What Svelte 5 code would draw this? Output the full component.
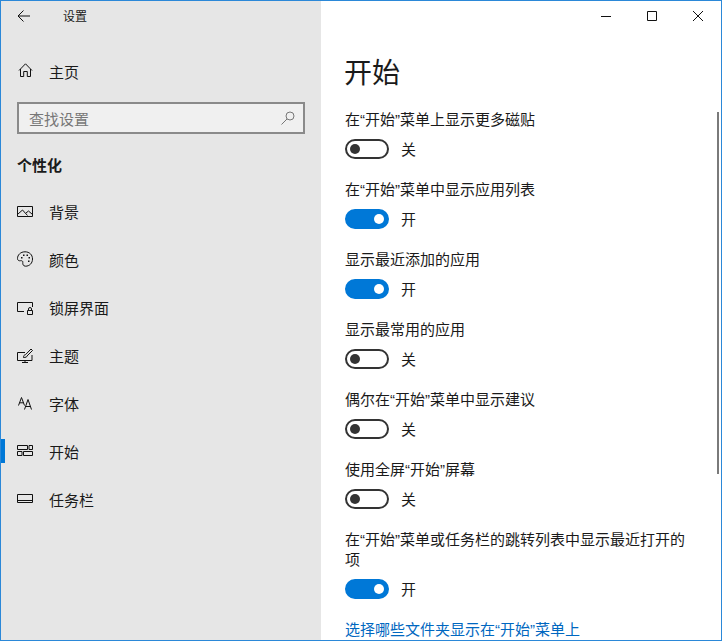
<script>
	const navItems = [
		{ label: "背景", icon: "image" },
		{ label: "颜色", icon: "palette" },
		{ label: "锁屏界面", icon: "lock" },
		{ label: "主题", icon: "theme" },
		{ label: "字体", icon: "font" },
		{ label: "开始", icon: "start", active: true },
		{ label: "任务栏", icon: "taskbar" }
	];

	const settings = [
		{ label: "在“开始”菜单上显示更多磁贴", on: false },
		{ label: "在“开始”菜单中显示应用列表", on: true },
		{ label: "显示最近添加的应用", on: true },
		{ label: "显示最常用的应用", on: false },
		{ label: "偶尔在“开始”菜单中显示建议", on: false },
		{ label: "使用全屏“开始”屏幕", on: false },
		{ label: "在“开始”菜单或任务栏的跳转列表中显示最近打开的项", on: true }
	];
</script>

<div class="window">
	<aside class="sidebar">
		<div class="titlebar">
			<svg class="back" width="14" height="12" viewBox="0 0 14 12">
				<path d="M6.500.5 1 6l5.500 5.500M1 6h12" />
			</svg>
			<span>设置</span>
		</div>
		<div class="home">
			<svg width="16" height="16" viewBox="0 0 16 16">
				<path d="M2 7.500 8.500.8 15 7.500M3.500 6v7.500h3.200V8.500h3.600v5h3.200V6" />
			</svg>
			<span>主页</span>
		</div>
		<div class="search">
			<span>查找设置</span>
			<svg width="16" height="16" viewBox="0 0 16 16">
				<circle cx="11" cy="6" r="4" />
				<path d="M8 9 2.500 14.500" />
			</svg>
		</div>
		<h2>个性化</h2>
		<nav>
			{#each navItems as item}
				<div class="nav-item" class:active={item.active}>
					<svg width="16" height="16" viewBox="0 0 16 16">
						{#if item.icon === "image"}
							<path d="M.5 3.500h15v10H.5zM1 11l4.500-4 5 5.500M9 10l2.500-2 4 3.500" />
						{:else if item.icon === "palette"}
							<path d="M8 .8C3.500.8.500 4 .5 7.500c0 2 1.500 2.500 3 2.200 1.500-.2 2.500.4 2.300 1.800-.2 1.500.3 3.700 2.700 3.700 4 0 7-3 7-7.200S12.500.8 8 .8z" />
							<path class="dots" d="M4 6h1.500v1.500H4zM6 3.500h1.500V5H6zM9.500 3.500H11V5H9.500zM11.500 6H13v1.500h-1.500zM11 9.500h1.500V11H11z" />
						{:else if item.icon === "lock"}
							<path d="M7 12.500H.5v-9h15V8" />
							<path d="M10.500 11.500h5v4h-5zM11.500 11.500V10a1.500 1.500 0 0 1 3 0v1.500" />
						{:else if item.icon === "theme"}
							<path d="M8 5.500H.5v8h14.500V8M8 13.500v2M5 15.500h6" />
							<path d="M6.500 10.500c0-2 .8-2.700 2-2.800L14 2l1.500 1.500L10 9c0 1-1.500 1.500-3.500 1.500z" />
						{:else if item.icon === "font"}
							<path d="M1.500 10.500 4.500 2.500l3 8M2.500 7.800h4M7.500 14.500 11 4.500l3.500 10M8.600 11.500h4.800" />
						{:else if item.icon === "start"}
							<path d="M.5 2.500h10v4H.5zM12 2.500h3.500v4H12zM.5 8.500H5v4H.5zM6.500 8.500h9v4h-9z" />
						{:else}
							<path d="M.5 3.500h15v8H.5zM.5 9.500h15" />
						{/if}
					</svg>
					<span>{item.label}</span>
				</div>
			{/each}
		</nav>
	</aside>

	<main class="content">
		<div class="controls">
			<svg width="10" height="10" viewBox="0 0 10 10"><path d="M0 5.500h10" /></svg>
			<svg width="10" height="10" viewBox="0 0 10 10"><path d="M.5.5h9v9h-9z" /></svg>
			<svg width="10" height="10" viewBox="0 0 10 10"><path d="M0 0l10 10M10 0 0 10" /></svg>
		</div>
		<h1>开始</h1>
		{#each settings as s}
			<div class="setting">
				<div class="label">{s.label}</div>
				<div class="toggle-row">
					<span class="toggle" class:on={s.on}><i></i></span>
					<span class="state">{s.on ? "开" : "关"}</span>
				</div>
			</div>
		{/each}
		<div class="link">选择哪些文件夹显示在“开始”菜单上</div>
		<div class="scrollbar"></div>
	</main>
</div>

<style>
	:global(body) {
		margin: 0;
	}
	.window {
		box-sizing: border-box;
		width: 722px;
		height: 641px;
		display: flex;
		border: 1px solid #2b88d8;
		overflow: hidden;
		position: relative;
		background: #fff;
		color: #1a1a1a;
		font-family: "Liberation Sans", "Noto Sans CJK SC", sans-serif;
		font-size: 15px;
	}
	svg {
		flex: none;
		fill: none;
		stroke: #111;
		stroke-width: 1;
	}
	.sidebar {
		width: 320px;
		flex: none;
		background: #e6e6e6;
	}
	.titlebar {
		height: 29px;
		display: flex;
		align-items: center;
		padding-left: 16px;
		font-size: 12px;
	}
	.titlebar span {
		margin-left: 32px;
	}
	.home {
		height: 48px;
		margin-top: 17px;
		display: flex;
		align-items: center;
		padding-left: 16px;
	}
	.home span {
		margin-left: 16px;
	}
	.search {
		box-sizing: border-box;
		width: 288px;
		height: 32px;
		margin: 7px 0 0 16px;
		padding: 0 10px;
		border: 2px solid #8a8a8a;
		background: #f0f0f0;
		color: #777;
		display: flex;
		align-items: center;
		justify-content: space-between;
	}
	.search svg {
		stroke: #777;
		margin-right: -2px;
	}
	h2 {
		margin: 20px 0 0 16px;
		font-size: 15px;
		line-height: 24px;
		font-weight: 700;
	}
	nav {
		margin-top: 9px;
	}
	.nav-item {
		height: 48px;
		display: flex;
		align-items: center;
		padding-left: 16px;
		position: relative;
	}
	.nav-item span {
		margin-left: 16px;
	}
	.nav-item.active::before {
		content: "";
		position: absolute;
		left: 0;
		top: 12px;
		width: 4px;
		height: 24px;
		background: #0078d7;
	}
	.dots {
		fill: #111;
		stroke: none;
	}
	.content {
		flex: 1;
		padding-left: 24px;
		position: relative;
		min-width: 0;
	}
	.controls {
		position: absolute;
		top: 10px;
		right: 18px;
		display: flex;
		gap: 36px;
	}
	h1 {
		margin: 0 0 13px -1px;
		padding-top: 50px;
		font-size: 28px;
		font-weight: 400;
		line-height: 46px;
	}
	.setting {
		width: 350px;
		margin-bottom: 21px;
	}
	.label {
		line-height: 20px;
	}
	.toggle-row {
		display: flex;
		align-items: center;
		height: 20px;
		margin-top: 9px;
		gap: 12px;
	}
	.state {
		margin-top: -2px;
	}
	.toggle {
		box-sizing: border-box;
		width: 44px;
		height: 20px;
		border: 2px solid #333;
		border-radius: 10px;
		display: flex;
		align-items: center;
		padding: 0 3px;
	}
	.toggle i {
		width: 10px;
		height: 10px;
		border-radius: 50%;
		background: #333;
	}
	.toggle.on {
		background: #0078d7;
		border-color: #0078d7;
		justify-content: flex-end;
	}
	.toggle.on i {
		background: #fff;
	}
	.link {
		color: #0067c0;
		line-height: 20px;
		margin-top: 1px;
	}
	.scrollbar {
		position: absolute;
		right: 2px;
		top: 111px;
		width: 2px;
		height: 362px;
		background: #7a7a7a;
	}
</style>
